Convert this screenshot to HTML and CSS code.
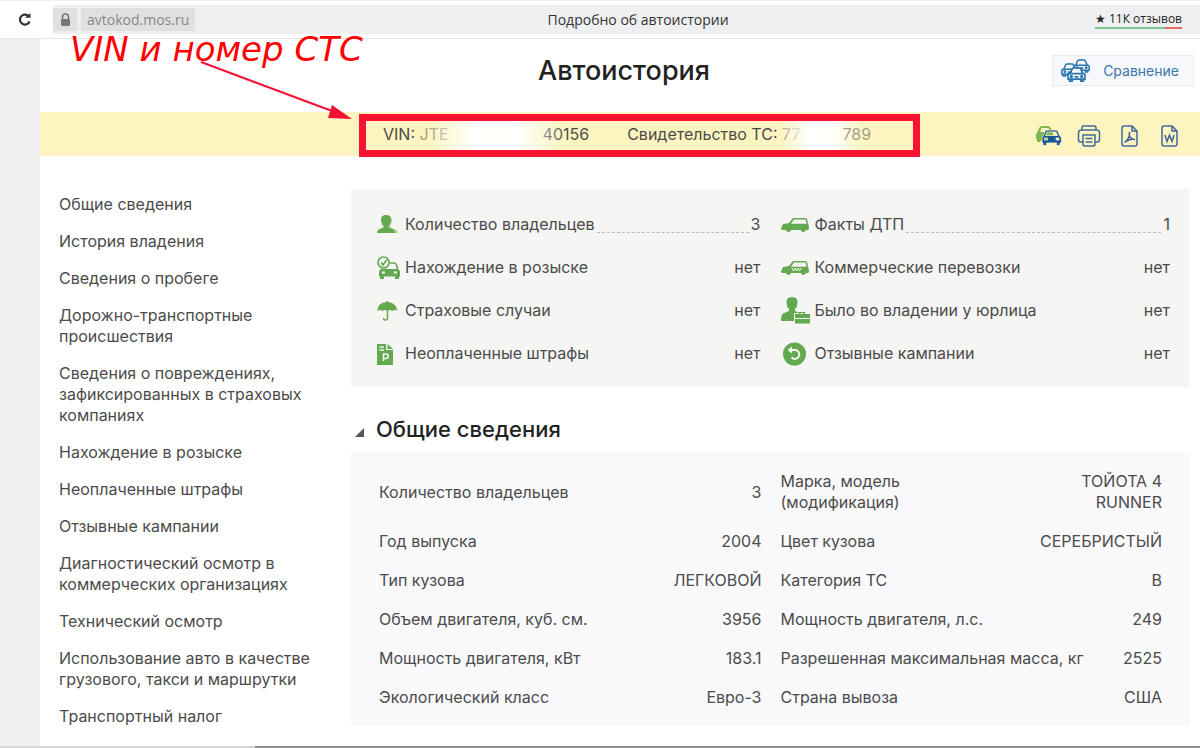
FILE: index.html
```html
<!DOCTYPE html>
<html lang="ru">
<head>
    <meta charset="UTF-8">
    <meta name="viewport" content="width=device-width, initial-scale=1.0">
    <title>Подробно об автоистории</title>
    <link rel="stylesheet" href="styles.css">
</head>
<body>
    <svg class="sprite" aria-hidden="true">
        <!-- машина спереди -->
        <symbol id="car-front" viewBox="0 0 20 16">
            <path d="M3.5 6.5 5.3 2.2Q5.7 1 7 1h6q1.300 0 1.700 1.200L16.500 6.500M2.500 7h15q1.500 0 1.500 1.500V13H1V8.500Q1 7 2.500 7ZM2.500 13v2h3v-2M14.500 13v2h3v-2M8 10.500h4" stroke-linejoin="round"/>
            <circle cx="4.500" cy="10" r=".8"/>
            <circle cx="15.500" cy="10" r=".8"/>
        </symbol>
        <!-- машина сбоку -->
        <symbol id="car-side" viewBox="0 0 28 16">
            <path fill-rule="evenodd" d="M1 9.500Q1 7 4 6.800L8 6 11 2Q11.700 1 13 1h11q1.800 0 2.200 1.500L27 7q.8.6.8 2v3q0 1-1 1h-2a2.600 2.600 0 0 1-5 0H10a2.600 2.600 0 0 1-5 0H2Q0 13 0 11.500ZM10 6.800h15.500L24.500 2.500H13Z"/>
        </symbol>
    </svg>

    <header class="browser">
        <button class="reload" type="button" aria-label="Обновить">
            <svg width="16" height="16" viewBox="0 0 16 16" fill="none" stroke="#333" stroke-width="2.200">
                <path d="M11 3.600A5 5 0 1 0 12.600 9.500"/>
                <path d="M8 5.800h5.500V1Z" fill="#333" stroke="none"/>
            </svg>
        </button>
        <div class="address">
            <span class="lock">
                <svg width="11" height="14" viewBox="0 0 11 14">
                    <path d="M2.500 6V4a3 3 0 0 1 6 0v2" fill="none" stroke="#777" stroke-width="1.600"/>
                    <rect x="1" y="6" width="9" height="7" rx="1" fill="#777"/>
                </svg>
            </span>
            <a class="host" href="#">avtokod.mos.ru</a>
            <span class="page-name">Подробно об автоистории</span>
            <a class="reviews" href="#">
                <span>★ 11К отзывов</span>
                <span class="rating"></span>
            </a>
        </div>
    </header>

    <div class="page">
        <div class="content">
            <div class="title-row">
                <h1>Автоистория</h1>
                <button class="compare" type="button">
                    <svg width="30" height="24" viewBox="0 0 30 24" fill="#f6f8fb" stroke="#2a74ad" stroke-width="1.800">
                        <use href="#car-front" x="12" y="0" width="17" height="14"/>
                        <use href="#car-front" x="0" y="4" width="17" height="14"/>
                        <use href="#car-front" x="6" y="8" width="19" height="15"/>
                    </svg>
                    Сравнение
                </button>
                <div class="note">VIN и номер СТС</div>
                <svg class="arrow" width="152" height="60" viewBox="0 0 152 60">
                    <path d="M1 1 132 50" stroke="#f51133" stroke-width="2"/>
                    <path d="M132 44 152 58 128 57Z" fill="#f51133"/>
                </svg>
            </div>

            <div class="car-bar">
                <div class="car-ids">
                    <span>VIN: <span class="faded">JTE</span><span class="smudge wide"></span>40156</span>
                    <span>Свидетельство ТС: <span class="faded">77</span><span class="smudge"></span><span class="faded">789</span></span>
                </div>
                <div class="tools">
                    <button type="button" aria-label="Сравнить">
                        <svg width="26" height="20" viewBox="0 0 26 20">
                            <path fill="#7cb650" fill-rule="evenodd" d="M1 7 3.500 1.500Q4 0 6 0h6q2 0 2.500 1.500L17 7v8H4v1H1V13H0V8ZM4 6h10L12.500 2h-7Z"/>
                            <path fill="#1b579b" stroke="#fdf4bf" stroke-width=".8" fill-rule="evenodd" d="M7 10 9 5.500Q9.500 4 11 4h9q1.500 0 2 1.500L24 10q1.500 1 1.500 2.500V17H24v2.500h-3.500V17h-10v2.500H7V17H6v-4.500Q6 11 7 10ZM9.500 9.500h12L20 6h-9ZM8.500 12v2h3v-2ZM20 12v2h3v-2Z"/>
                        </svg>
                    </button>
                    <button type="button" aria-label="Печать">
                        <svg width="24" height="22" viewBox="0 0 24 22" fill="none" stroke="#41689c" stroke-width="1.500">
                            <path d="M5 5V2.500Q5 1 6.500 1h11Q19 1 19 2.500V5M6 17H4Q1.500 17 1.500 14.500V8Q1.500 5 4.500 5h15q3 0 3 3v6.500Q22.500 17 20 17h-2M6 10h12v9q0 2-2 2H8q-2 0-2-2ZM8.500 13.500h7M8.500 17h7"/>
                        </svg>
                    </button>
                    <button type="button" aria-label="Скачать PDF">
                        <svg width="17" height="22" viewBox="0 0 17 22" fill="none" stroke="#41689c" stroke-width="1.500">
                            <path d="M1 3q0-2 2-2h8l5 5v13q0 2-2 2H3q-2 0-2-2ZM11 1v5h5M3.500 17.500C7 15 9 11 8.500 7c-1.500 4 2 8 5.500 7.500-3-1-7 .5-10.500 3Z"/>
                        </svg>
                    </button>
                    <button type="button" aria-label="Скачать Word">
                        <svg width="17" height="22" viewBox="0 0 17 22" fill="none" stroke="#41689c" stroke-width="1.500">
                            <path d="M1 3q0-2 2-2h8l5 5v13q0 2-2 2H3q-2 0-2-2ZM11 1v5h5M4 10l2 6.500L8.500 10l2.500 6.500L13 10"/>
                        </svg>
                    </button>
                </div>
            </div>

            <div class="columns">
                <nav class="menu">
                    <a href="#">Общие сведения</a>
                    <a href="#">История владения</a>
                    <a href="#">Сведения о пробеге</a>
                    <a href="#">Дорожно-транспортные<br>происшествия</a>
                    <a href="#">Сведения о повреждениях,<br>зафиксированных в страховых<br>компаниях</a>
                    <a href="#">Нахождение в розыске</a>
                    <a href="#">Неоплаченные штрафы</a>
                    <a href="#">Отзывные кампании</a>
                    <a href="#">Диагностический осмотр в<br>коммерческих организациях</a>
                    <a href="#">Технический осмотр</a>
                    <a href="#">Использование авто в качестве<br>грузового, такси и маршрутки</a>
                    <a href="#">Транспортный налог</a>
                    <a href="#">Обременения</a>
                </nav>

                <main class="report">
                    <section class="summary">
                        <ul>
                            <li>
                                <span class="icon"><svg width="21" height="19" viewBox="0 0 21 19">
                                    <path d="M9 1q7-1 6 5.500Q14.500 9.500 13 11q1 2 7 4 1 1 1 3H9Z" fill="#b4d8a3"/>
                                    <path d="M9 0q5 0 5 5 0 4-2.500 6v1.500l5 2Q18 15.500 18 18H0q0-2.500 1.500-3.500l5-2V11Q4 9 4 5q0-5 5-5Z"/>
                                </svg></span>
                                <span>Количество владельцев</span><span class="dots"></span><span>3</span>
                            </li>
                            <li>
                                <span class="icon"><svg width="24" height="24" viewBox="0 0 24 24">
                                    <circle cx="6.500" cy="6.500" r="5.500" fill="none" stroke="#62a950" stroke-width="1.700"/>
                                    <path d="M4 6.500 6 9l3.500-5M13 7h4q2 0 2.500 2l1 4" fill="none" stroke="#62a950" stroke-width="1.700"/>
                                    <path fill-rule="evenodd" d="M4 13h17q2 1 2 3v4.500h-1V23h-4v-2.500H7V23H3v-2.500H2V16q0-2 2-3ZM5 15.500v2h3v-2ZM17 15.500v2h3v-2Z"/>
                                </svg></span>
                                <span>Нахождение в розыске</span><span class="dots none"></span><span>нет</span>
                            </li>
                            <li>
                                <span class="icon"><svg width="21" height="20" viewBox="0 0 21 20">
                                    <path d="M0 10Q1 1.500 9.500 1V0h1.500v1Q19 1.500 20.500 10q-2.500-2-5 0-2.500-2-5 0-2.500-2-5 0Q3 8 0 10Z"/>
                                    <path d="M10.500 8v9q0 2-2 2t-2-2" fill="none" stroke="#62a950" stroke-width="1.500"/>
                                </svg></span>
                                <span>Страховые случаи</span><span class="dots none"></span><span>нет</span>
                            </li>
                            <li>
                                <span class="icon"><svg width="18" height="22" viewBox="0 0 18 22">
                                    <path d="M0 1h9v6h7v15H0Z"/>
                                    <path d="M10.500 1 16 6h-5.500Z"/>
                                    <path d="M2.500 4H7M2.500 7H7M6.500 18v-7H9a2 2 0 0 1 0 4.500H6.500" fill="none" stroke="#f5f5f3" stroke-width="1.600"/>
                                </svg></span>
                                <span>Неоплаченные штрафы</span><span class="dots none"></span><span>нет</span>
                            </li>
                        </ul>
                        <ul class="right">
                            <li>
                                <span class="icon"><svg width="28" height="16"><use href="#car-side"/></svg></span>
                                <span>Факты ДТП</span><span class="dots"></span><span>1</span>
                            </li>
                            <li>
                                <span class="icon"><svg width="28" height="16">
                                    <use href="#car-side"/>
                                    <path d="m11 8 1.500 3L14 8l1.500 3L17 8l1.500 3L20 8" fill="none" stroke="#f5f5f3"/>
                                </svg></span>
                                <span>Коммерческие перевозки</span><span class="dots none"></span><span>нет</span>
                            </li>
                            <li>
                                <span class="icon"><svg width="29" height="27" viewBox="0 0 29 27">
                                    <path d="M11 0q6 0 5.500 6 0 4-2.500 6v2l5 2h-6v8H0q0-6 2-7.500L8 14v-2Q5.500 10 5.500 6 5 0 11 0Z"/>
                                    <path d="M14 17h4v-2h6v2h5v4H14ZM19.500 16v1h3v-1ZM14 22h15v4.500H14Z" fill-rule="evenodd"/>
                                </svg></span>
                                <span>Было во владении у юрлица</span><span class="dots none"></span><span>нет</span>
                            </li>
                            <li>
                                <span class="icon"><svg width="26" height="24" viewBox="0 0 26 24">
                                    <circle cx="13.500" cy="12" r="11.500"/>
                                    <path d="M9 8h5.500a4.500 4.500 0 1 1-4 7.500" fill="none" stroke="#f5f5f3" stroke-width="1.900"/>
                                    <path d="M6.500 8 11 4.500v7Z" fill="#f5f5f3"/>
                                </svg></span>
                                <span>Отзывные кампании</span><span class="dots none"></span><span>нет</span>
                            </li>
                        </ul>
                    </section>

                    <h2>
                        <svg width="9" height="9" viewBox="0 0 9 9"><path d="M9 0v9H0Z" fill="#555"/></svg>
                        Общие сведения
                    </h2>
                    <section class="details">
                        <table>
                            <tr><th>Количество владельцев</th><td>3</td><th>Марка, модель<br>(модификация)</th><td>ТОЙОТА 4<br>RUNNER</td></tr>
                            <tr><th>Год выпуска</th><td>2004</td><th>Цвет кузова</th><td>СЕРЕБРИСТЫЙ</td></tr>
                            <tr><th>Тип кузова</th><td>ЛЕГКОВОЙ</td><th>Категория ТС</th><td>B</td></tr>
                            <tr><th>Объем двигателя, куб. см.</th><td>3956</td><th>Мощность двигателя, л.с.</th><td>249</td></tr>
                            <tr><th>Мощность двигателя, кВт</th><td>183.1</td><th>Разрешенная максимальная масса, кг</th><td>2525</td></tr>
                            <tr><th>Экологический класс</th><td>Евро-3</td><th>Страна вывоза</th><td>США</td></tr>
                        </table>
                    </section>
                </main>
            </div>
        </div>
    </div>
    <div class="bottom-line"></div>
</body>
</html>
```
FILE: styles.css
```css
* {
    box-sizing: border-box;
}
body {
    margin: 0;
    height: 100vh;
    overflow: hidden;
    display: flex;
    flex-direction: column;
    font-family: Inter, "Liberation Sans", sans-serif;
    font-size: 16px;
    line-height: 21px;
    color: #4b4b4b;
    background-color: #fff;
}
a {
    color: inherit;
    text-decoration: none;
}
button {
    padding: 0;
    border: none;
    background: none;
    font: inherit;
    color: inherit;
    cursor: pointer;
}
svg {
    display: block;
    flex: none;
}
.sprite {
    position: absolute;
    width: 0;
    height: 0;
}

/* строка браузера */
.browser {
    flex: none;
    display: flex;
    align-items: center;
    height: 39px;
    padding-left: 17px;
    border-top: 1px solid #eee;
    border-bottom: 1px solid #e6e6e6;
    font-family: "Open Sans", "Noto Sans", sans-serif;
    font-size: 14px;
}
.address {
    flex: 1;
    display: flex;
    align-items: center;
    gap: 4px;
    height: 29px;
    margin-left: 20px;
    padding-right: 18px;
    background-color: #eeeff1;
}
.lock, .host {
    display: flex;
    align-items: center;
    justify-content: center;
    height: 23px;
    background-color: #e0e0e1;
}
.lock {
    width: 24px;
}
.host {
    padding: 0 6px;
    color: #888;
}
.page-name {
    flex: 1;
    text-align: center;
    padding-right: 14px;
    color: #333;
}
.reviews {
    font-size: 12px;
    line-height: 16px;
    color: #222;
}
.rating {
    display: block;
    height: 2px;
    background: linear-gradient(90deg, #7cc596 80%, #ee6a5c 80%);
}

.page {
    flex: 1;
    min-height: 0;
    padding-left: 40px;
    background-color: #f0f0f0;
}
.content {
    min-height: 100%;
    background-color: #fff;
}
.title-row {
    position: relative;
    display: grid;
    grid-template-columns: 1fr auto 1fr;
    align-items: center;
    height: 73px;
    padding: 0 6px 10px 14px;
}
h1 {
    grid-column: 2;
    margin: 0;
    font-size: 27px;
    line-height: 36px;
    font-weight: 500;
    color: #222;
}
.compare {
    justify-self: end;
    display: flex;
    align-items: center;
    gap: 12px;
    height: 31px;
    padding: 0 14px 0 8px;
    border: 1px solid #e9ebef;
    background-color: #f6f8fb;
    font-size: 14px;
    color: #3a77ab;
}

/* красная подпись со стрелкой */
.note {
    position: absolute;
    left: 30px;
    top: -9px;
    font-family: "DejaVu Sans", Verdana, sans-serif;
    font-size: 34px;
    line-height: 38px;
    font-style: italic;
    color: #f00;
}
.arrow {
    position: absolute;
    left: 160px;
    top: 22px;
}

.car-bar {
    display: flex;
    align-items: center;
    height: 44px;
    padding: 0 11px 0 319px;
    background-color: #fdf4bf;
}
.car-ids {
    display: flex;
    align-items: center;
    gap: 38px;
    height: 43px;
    margin-top: 3px;
    padding: 0 42px 0 17px;
    border: 7px solid #f91434;
    white-space: nowrap;
}
.faded {
    opacity: 0.5;
}
.smudge {
    position: relative;
    display: inline-block;
    width: 84px;
    height: 29px;
    margin: 0 -21px;
    vertical-align: middle;
    background: linear-gradient(90deg, rgba(255, 255, 252, 0), #fffffc 35%, #fffffc 65%, rgba(255, 255, 252, 0));
}
.smudge.wide {
    width: 140px;
    margin: 0 -23px;
}
.tools {
    display: flex;
    align-items: center;
    margin: 4px 0 0 auto;
}
.tools button {
    display: flex;
    justify-content: center;
    width: 40px;
}

.columns {
    display: flex;
    align-items: flex-start;
    padding: 33px 10px 0 19px;
}
.menu {
    flex: none;
    display: flex;
    flex-direction: column;
    gap: 16px;
    width: 292px;
    padding-top: 5px;
    font-size: 16px;
    white-space: nowrap;
}
.report {
    flex: 1;
}

.summary {
    display: grid;
    grid-template-columns: 64fr 65fr;
    gap: 20px;
    padding: 14px 20px 12px 26px;
    background-color: #f5f5f3;
}
.summary ul {
    margin: 0;
    padding: 0;
    list-style: none;
}
.summary li {
    display: flex;
    align-items: center;
    height: 43px;
}
.icon {
    flex: none;
    display: flex;
    justify-content: flex-start;
    width: 28px;
    fill: #62a950;
}
.right .icon {
    width: 34px;
}
.dots {
    flex: 1;
    height: 16px;
    margin: 0 2px;
    border-bottom: 1px dashed #bbb;
}
.dots.none {
    border: none;
}

h2 {
    display: flex;
    align-items: baseline;
    gap: 12px;
    margin: 26px 0 7px;
    padding-left: 4px;
    font-size: 22px;
    line-height: 32px;
    font-weight: 500;
    color: #222;
}
.details {
    padding: 10px 28px 9px;
    background-color: #f9f9fc;
}
table {
    width: 100%;
    table-layout: fixed;
    border-collapse: collapse;
}
tr {
    height: 39px;
}
tr:first-child {
    height: 60px;
}
th, td {
    padding: 0;
    white-space: nowrap;
}
th {
    width: 34%;
    text-align: left;
    font-weight: 400;
}
td {
    width: 16%;
    text-align: right;
}
td:nth-child(2) {
    padding-right: 9px;
}
th:nth-child(3) {
    padding-left: 10px;
}

.bottom-line {
    position: absolute;
    left: 0;
    right: 0;
    bottom: 0;
    height: 2px;
    background: linear-gradient(90deg, #d5d5d5 255px, #8c8c8c 255px);
}
```
